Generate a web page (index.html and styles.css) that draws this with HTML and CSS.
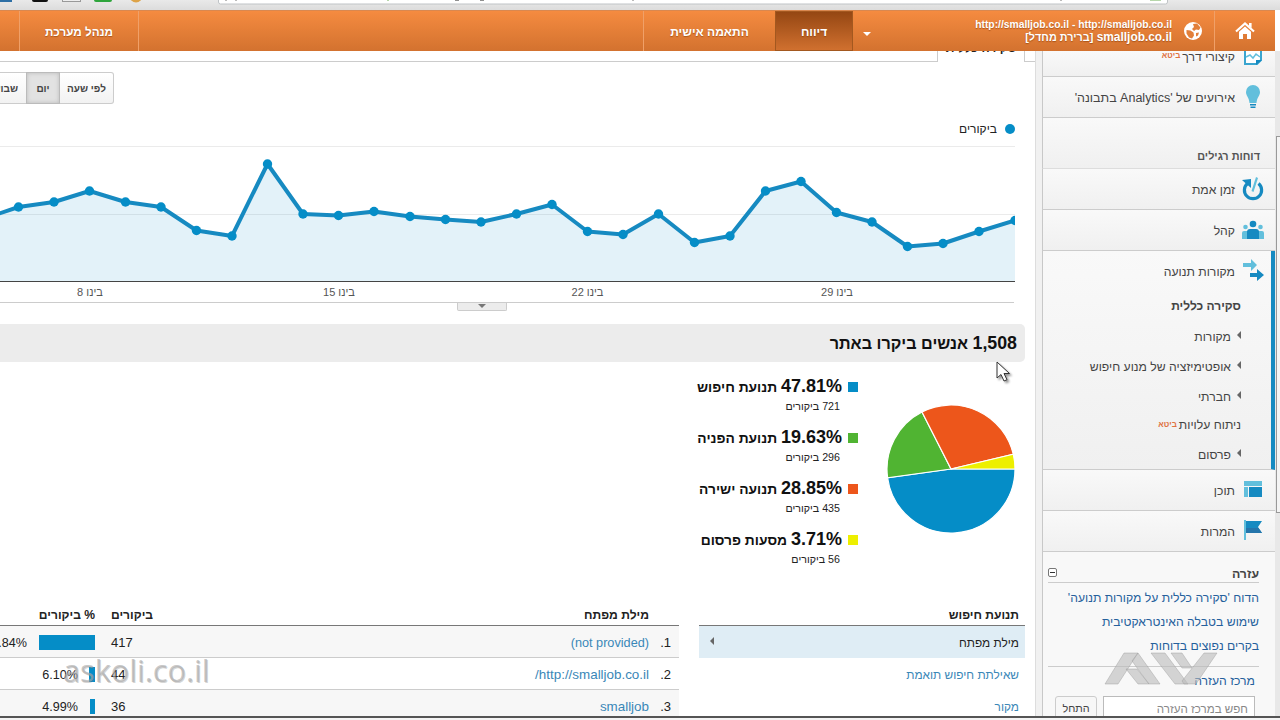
FILE: index.html
```
<!DOCTYPE html>
<html lang="he" dir="rtl">
<head>
    <meta charset="UTF-8">
    <title>סקירה כללית - מקורות תנועה</title>
    <link rel="stylesheet" href="styles.css">
</head>
<body>
    <div class="browser-strip">
        <svg width="1280" height="10">
            <rect x="0" y="0" width="12" height="2" fill="#2d6fa5"/>
            <rect x="32" y="-4" width="16" height="6" rx="2" fill="#111"/>
            <rect x="62.5" y="-4" width="18" height="5.5" fill="#eee" stroke="#999"/>
            <rect x="94" y="-4" width="18" height="6" rx="2" fill="#2fa53c"/>
            <circle cx="136" cy="-4" r="6.5" fill="#dda348"/>
            <rect x="218.5" y="-6" width="949" height="10" rx="2" fill="#fff" stroke="#bfc3c6"/>
            <path d="M226 0v1M236 0v1M633 0v1M1061 0v1" stroke="#777"/>
            <path d="M455 0h4M480 0h4" stroke="#222"/>
            <path d="M388 0v1M1150 0h11" stroke="#6fae57"/>
        </svg>
    </div>

    <div class="header">
        <div class="home">
            <svg width="20" height="18" viewBox="0 0 20 18">
                <path d="M1 9.5L10 1.5l9 8" fill="none" stroke="#fff" stroke-width="2.2"/>
                <path d="M14 1h2.6v5L14 4zM4 9.8l6-5.3 6 5.3V17h-4v-5H8v5H4z" fill="#fff"/>
            </svg>
        </div>
        <div class="account">
            <svg width="18" height="18" viewBox="0 0 18 18">
                <circle cx="9" cy="9" r="9" fill="#fff"/>
                <path d="M9 2l4-.5 3.500 4-1.500 2.500-3-.5-2 1.500-2-2 2-2zM2.500 8l4 .5 3 2 .5 3-2 3-3-1-2.500-4z" fill="#e27f3a"/>
                <path d="M12 11l3-.5-1 3-2 1z" fill="#e27f3a"/>
            </svg>
            <div class="account-text">
                <div class="account-url">http://smalljob.co.il - http://smalljob.co.il</div>
                <div class="account-name">smalljob.co.il <span class="view">[ברירת מחדל]</span></div>
            </div>
            <span class="caret"></span>
        </div>
        <div class="nav-item nav-report active">דיווח</div>
        <div class="nav-item nav-custom">התאמה אישית</div>
        <div class="nav-space"></div>
        <div class="nav-item nav-admin">מנהל מערכת</div>
        <div class="nav-rest"></div>
    </div>

    <div class="main">
        <div class="scrollbar"><div class="thumb"></div></div>
        <div class="sidebar">
            <div class="menu-item cut">
                <svg class="icon" width="24" height="24" viewBox="0 0 22 24">
                    <path d="M3 3h16v13l-4 4H3z" fill="#fff" stroke="#3aa5cf" stroke-width="2"/>
                    <path d="M4 13l4-2 3 3 3-4 4 3" fill="none" stroke="#62bfdc" stroke-width="1.5"/>
                    <path d="M14 21v-5h6z" fill="#168ac1"/>
                </svg>
                <span>קיצורי דרך</span><sup class="beta">ביטא</sup>
            </div>
            <div class="menu-item analytics">
                <svg class="icon" width="24" height="24" viewBox="0 0 22 24">
                    <path d="M11 0a7 7 0 0 1 7 7c0 4-3 5-3.500 11h-7C7 12 4 11 4 7a7 7 0 0 1 7-7z" fill="#62bfdc"/>
                    <path d="M8 19h6v1.500H8zM8.500 21.500h5V23h-5z" fill="#168ac1"/>
                </svg>
                <span>אירועים של 'Analytics בתבונה'</span>
            </div>
            <div class="menu-title">דוחות רגילים</div>
            <div class="menu-item">
                <svg class="icon" width="24" height="24" viewBox="0 0 22 24">
                    <path d="M5.500 6.500a8.600 8.600 0 1 0 11 0" fill="none" stroke="#168ac1" stroke-width="3.2"/>
                    <path d="M0 3l9-1v9z" fill="#168ac1"/>
                    <path d="M14 0l2 1-4.500 14-2-1z" fill="#62bfdc"/>
                </svg>
                <span>זמן אמת</span>
            </div>
            <div class="menu-item">
                <svg class="icon" width="24" height="20" viewBox="0 0 24 20">
                    <circle cx="4.500" cy="7" r="2.300" fill="#62bfdc"/><circle cx="19.500" cy="7" r="2.300" fill="#62bfdc"/>
                    <path d="M1 19v-6q0-2 2-2h18q2 0 2 2v6z" fill="#62bfdc"/>
                    <circle cx="12" cy="4" r="3.300" fill="#168ac1"/>
                    <path d="M6 19v-7q0-3 3-3h6q3 0 3 3v7z" fill="#168ac1"/>
                </svg>
                <span>קהל</span>
            </div>
            <div class="menu-group">
                <div class="menu-item open">
                    <svg class="icon" width="24" height="24" viewBox="0 0 22 24">
                        <path d="M1 4h8V0l6 6-6 6V8H1z" fill="#62bfdc"/>
                        <path d="M8 14h7v-4l7 6-7 6v-4H8z" fill="#168ac1"/>
                    </svg>
                    <span>מקורות תנועה</span>
                </div>
                <div class="sub-item current">סקירה כללית</div>
                <div class="sub-item"><i class="tri"></i><span>מקורות</span></div>
                <div class="sub-item"><i class="tri"></i><span>אופטימיזציה של מנוע חיפוש</span></div>
                <div class="sub-item"><i class="tri"></i><span>חברתי</span></div>
                <div class="sub-item costs"><span>ניתוח עלויות</span><sup class="beta">ביטא</sup></div>
                <div class="sub-item"><i class="tri"></i><span>פרסום</span></div>
            </div>
            <div class="menu-item">
                <svg class="icon" width="24" height="20" viewBox="0 0 22 20">
                    <path d="M2 1h18v5H2zM2 7h4v10H2z" fill="#62bfdc"/>
                    <path d="M7 7h13v10H7z" fill="#168ac1"/>
                </svg>
                <span>תוכן</span>
            </div>
            <div class="menu-item">
                <svg class="icon" width="24" height="24" viewBox="0 0 22 24">
                    <path d="M2 1h2v20H2z" fill="#62bfdc"/>
                    <path d="M4 2h16l-4 6 4 6H4z" fill="#168ac1"/>
                    <path d="M4 9h12.500l3.500 5H4z" fill="#2575ab"/>
                </svg>
                <span>המרות</span>
            </div>
            <div class="help">
                <div class="help-head"><b>עזרה</b><span class="collapse"></span></div>
                <a class="help-link">הדוח 'סקירה כללית על מקורות תנועה'</a>
                <a class="help-link">שימוש בטבלה האינטראקטיבית</a>
                <a class="help-link">בקרים נפוצים בדוחות</a>
                <div class="help-center">
                    <a class="help-link">מרכז העזרה</a>
                    <div class="help-search">
                        <div class="search-box">חפש במרכז העזרה</div>
                        <div class="search-button">התחל</div>
                    </div>
                </div>
            </div>
        </div>

        <div class="content">
            <div class="tabs">
                <div class="tab-edge"></div>
                <div class="tab">סקירה כללית</div>
                <div class="tab-line"></div>
            </div>
            <div class="range">
                <div class="range-button hour">לפי שעה</div>
                <div class="range-button day">יום</div>
                <div class="range-button week">שבוע</div>
            </div>
            <div class="legend"><i class="dot"></i><span>ביקורים</span></div>
            <svg class="chart" width="1015" height="162" viewBox="0 140 1015 162">
                <path d="M0 146.5H1015M0 214.5H1015" stroke="#ebebeb"/>
                <path id="area" fill="#058dc7" fill-opacity=".115"/>
                <path id="line" fill="none" stroke="#168ac1" stroke-width="4" stroke-linejoin="round"/>
                <g id="dots" fill="#058dc7"></g>
                <path d="M0 281.5H1015" stroke="#444"/>
                <g class="axis">
                    <text x="90" y="296">בינו 8</text>
                    <text x="339" y="296">בינו 15</text>
                    <text x="587.5" y="296">בינו 22</text>
                    <text x="837" y="296">בינו 29</text>
                </g>
            </svg>
            <div class="expander"><div class="handle"><i></i></div></div>
            <h2 class="summary"><b>1,508</b> אנשים ביקרו באתר</h2>
            <div class="sources">
                <svg class="pie" width="130" height="130" viewBox="-65 -65 130 130" stroke="#fff" stroke-width="1.2">
                    <path d="M0 0L64 0A64 64 0 0 1 -63.400 8.780z" fill="#058dc7"/>
                    <path d="M0 0L-63.400 8.780A64 64 0 0 1 -29 -57.050z" fill="#50b432"/>
                    <path d="M0 0L-29 -57.050A64 64 0 0 1 62.270 -14.780z" fill="#ed561b"/>
                    <path d="M0 0L62.270 -14.780A64 64 0 0 1 64 0z" fill="#edef00"/>
                </svg>
                <div class="source-list">
                    <div class="source">
                        <i class="swatch blue"></i>
                        <div><div class="source-name"><b>47.81%</b> תנועת חיפוש</div><div class="source-visits">721 ביקורים</div></div>
                    </div>
                    <div class="source">
                        <i class="swatch green"></i>
                        <div><div class="source-name"><b>19.63%</b> תנועת הפניה</div><div class="source-visits">296 ביקורים</div></div>
                    </div>
                    <div class="source">
                        <i class="swatch orange"></i>
                        <div><div class="source-name"><b>28.85%</b> תנועה ישירה</div><div class="source-visits">435 ביקורים</div></div>
                    </div>
                    <div class="source">
                        <i class="swatch yellow"></i>
                        <div><div class="source-name"><b>3.71%</b> מסעות פרסום</div><div class="source-visits">56 ביקורים</div></div>
                    </div>
                </div>
            </div>
            <div class="tables">
                <div class="dimensions">
                    <div class="table-head">תנועת חיפוש</div>
                    <div class="dimension selected"><span>מילת מפתח</span><i class="tri"></i></div>
                    <div class="dimension">שאילתת חיפוש תואמת</div>
                    <div class="dimension">מקור</div>
                </div>
                <div class="keywords">
                    <div class="table-head row">
                        <span class="num"></span><span class="word">מילת מפתח</span><span class="visits">ביקורים</span><span class="share-head">% ביקורים</span>
                    </div>
                    <div class="row odd">
                        <span class="num">1.</span><a class="word">(not provided)</a><span class="visits">417</span>
                        <span class="share"><i class="bar" style="width: 56px"></i></span><span class="percent">57.84%</span>
                    </div>
                    <div class="row">
                        <span class="num">2.</span><a class="word wide">http://smalljob.co.il/</a><span class="visits">44</span>
                        <span class="share small"><i class="bar" style="width: 6px"></i></span><span class="percent">6.10%</span>
                    </div>
                    <div class="row odd">
                        <span class="num">3.</span><a class="word wide">smalljob</a><span class="visits">36</span>
                        <span class="share small"><i class="bar" style="width: 5px"></i></span><span class="percent">4.99%</span>
                    </div>
                </div>
            </div>
        </div>
    </div>
    <div class="taskbar"></div>

    <div class="watermark">askoli.co.il</div>
    <svg class="logo-mark" width="114" height="34" viewBox="0 0 114 34">
        <g fill="#bbb" fill-opacity=".6" stroke="#999" stroke-opacity=".4">
            <path d="M1 32L20 1h14L14 32z"/>
            <path d="M22 17h11l12 15H34z"/>
            <path d="M34 1l22 31H45L28 9z"/>
            <path d="M47 1h14l23 31H71z"/>
            <path d="M67 1h11l10 15H78z"/>
            <path d="M100 1h13L92 32H80l-2-3z"/>
        </g>
    </svg>
    <svg class="cursor" width="18" height="24" viewBox="0 0 18 24">
        <path d="M1 1v16l4-3.500 3 6.500 3-1.300-3-6.200h5.500z" fill="#fff" stroke="#333"/>
    </svg>
    <script src="chart.js"></script>
</body>
</html>
```
FILE: styles.css
```
* {
    box-sizing: border-box;
}
body {
    margin: 0;
    width: 1280px;
    height: 720px;
    overflow: hidden;
    position: relative;
    display: flex;
    flex-direction: column;
    background: #fff;
    color: #222;
    font: 12px/16px "Liberation Sans", Arial, sans-serif;
}
svg {
    display: block;
    flex: none;
}
.browser-strip {
    height: 10px;
    flex: none;
    background: linear-gradient(#e9e9e9, #dcdcdc);
    direction: ltr;
}

/* header */
.header {
    height: 41px;
    width: 1275px;
    margin-right: 5px;
    flex: none;
    display: flex;
    background: linear-gradient(#f58b40, #d3722f);
    border-top: 1px solid #d98850;
    color: #fff;
    font-weight: bold;
    text-shadow: 0 1px 1px rgba(120, 50, 0, 0.5);
}
.home {
    width: 61px;
    display: flex;
    align-items: center;
    justify-content: center;
    border-left: 1px solid #f0a068;
}
.account {
    width: 362px;
    padding-right: 12px;
    display: flex;
    align-items: center;
}
.account-text {
    width: 301px;
    margin-right: 12px;
    line-height: 13px;
}
.account-url {
    font-size: 10.3px;
}
.account-name {
    font-size: 11.9px;
}
.view {
    font-size: 10.8px;
}
.caret {
    margin-top: 6px;
    border: 4px solid transparent;
    border-top-color: #fff;
    border-bottom: 0;
}
.nav-item {
    display: flex;
    align-items: center;
    justify-content: center;
    padding-top: 2px;
    border-left: 1px solid #f0a068;
    flex: none;
}
.nav-report {
    width: 78px;
}
.nav-item.active {
    background: linear-gradient(#954713, #d0702f);
    border: 1px solid #a3581f;
}
.nav-custom {
    width: 132px;
}
.account {
    width: 361px;
}
.nav-space {
    flex: 1;
    border-left: 1px solid #f0a068;
}
.nav-admin {
    width: 119px;
    font-size: 11.7px;
}
.nav-rest {
    width: 19px;
}

/* page body */
.main {
    height: 665px;
    flex: none;
    display: flex;
    overflow: hidden;
}
.scrollbar {
    width: 5px;
    flex: none;
    background: #e8e8e8;
    padding-top: 85px;
}
.thumb {
    height: 377px;
    margin-left: 1px;
    border: 1px solid #999;
    border-right: 0;
    background: #f4f4f4;
}

/* sidebar */
.sidebar {
    width: 239px;
    flex: none;
    background: #f8f8f8;
    border-left: 6px solid #f1f1f1;
    color: #444;
}
.menu-item {
    height: 41px;
    display: flex;
    align-items: center;
    padding-right: 10px;
    border-bottom: 1px solid #ccc;
    border-left: 1px solid #c8c8c8;
    background: linear-gradient(#f9f9f9, #f0f0f0);
    font-size: 12.2px;
}
.menu-item span {
    padding-top: 1px;
}
.icon {
    margin-left: 6px;
}
.menu-item.cut {
    height: 26px;
    padding-bottom: 15px;
}
.analytics {
    font-size: 12.5px;
}
.beta {
    margin-right: 2px;
    color: #e0713f;
    font: bold 8px/10px "Liberation Sans", Arial, sans-serif;
}
.menu-title {
    height: 51px;
    padding: 30px 15px 0 0;
    border-bottom: 1px solid #ddd;
    border-left: 1px solid #c8c8c8;
    background: linear-gradient(#f9f9f9, #f0f0f0);
    font-weight: bold;
    font-size: 10.9px;
    color: #555;
}
.menu-group {
    height: 219px;
    border-bottom: 1px solid #ccc;
    border-left: 1px solid #c8c8c8;
    border-right: 4px solid #168ac1;
    background: linear-gradient(#f9f9f9, #f0f0f0);
}
.menu-item.open {
    height: 40px;
    border: 0;
    background: none;
    padding-right: 6px;
}
.sub-item {
    height: 30px;
    display: flex;
    align-items: center;
    padding-right: 30px;
    padding-top: 1px;
    font-size: 12.2px;
}
.sub-item.current {
    font-weight: bold;
    font-size: 12px;
    padding-top: 0;
}
.sub-item.costs {
    height: 28px;
    padding-top: 0;
}
.tri {
    border: 4px solid transparent;
    border-left: 0;
    border-right: 4px solid #666;
    margin-bottom: 4px;
}
.sub-item .tri {
    margin-left: 5px;
}
.sub-item .tri + span {
    margin-right: 1px;
}

/* help box */
.help {
    padding: 14px 16px 0 5px;
    border-left: 1px solid #c8c8c8;
    height: 170px;
}
.help-head {
    height: 17px;
    display: flex;
    justify-content: space-between;
    border-bottom: 1px solid #ccc;
    margin-bottom: 3px;
    font-size: 12.3px;
}
.collapse {
    width: 9px;
    height: 9px;
    margin-top: 2px;
    padding: 3px 1px;
    border: 1px solid #777;
    border-radius: 2px;
    background: #fff;
}
.collapse::after {
    content: "";
    display: block;
    height: 1px;
    background: #333;
}
.help-link {
    display: block;
    height: 24px;
    line-height: 24px;
    color: #25609c;
    font-size: 12.2px;
    white-space: nowrap;
}
.help-center {
    margin-top: 8px;
    padding: 2px 4px 0 0;
    border-top: 1px solid #ccc;
}
.help-search {
    margin-top: 3px;
    display: flex;
    gap: 6px;
}
.search-box,
.search-button {
    height: 30px;
    border: 1px solid #bbb;
    background: #fff;
    line-height: 23px;
    font-size: 11.6px;
}
.search-box {
    width: 152px;
    padding-right: 6px;
    color: #888;
}
.search-button {
    width: 42px;
    border-color: #ccc;
    border-radius: 3px;
    background: #f7f7f7;
    text-align: center;
    font-size: 10.8px;
}

/* report */
.content {
    width: 1036px;
    flex: none;
    border-right: 1px solid #ddd;
    background: #fff;
}
.tabs {
    height: 11px;
    display: flex;
}
.tab-edge {
    width: 10px;
    border-bottom: 1px solid #ccc;
}
.tab {
    width: 88px;
    height: 14px;
    margin-top: -3px;
    border: solid #ccc;
    border-width: 0 1px;
    line-height: 0;
    text-align: center;
    font-weight: bold;
    font-size: 12.1px;
}
.tab-line {
    flex: 1;
    border-bottom: 1px solid #ccc;
}
.range {
    margin: 10px 921px 0 0;
    display: flex;
    height: 32px;
    font-size: 10px;
    font-weight: bold;
    line-height: 31px;
    text-align: center;
    color: #444;
}
.range-button {
    flex: none;
    border: 1px solid #ccc;
    background: linear-gradient(#fff, #f2f2f2);
}
.hour {
    width: 54px;
    border-left: 0;
    border-radius: 0 3px 3px 0;
}
.day {
    width: 34px;
    border-color: #bbb;
    background: #e2e2e2;
    box-shadow: inset 0 0 4px #bbb;
}
.week {
    width: 44px;
    padding-right: 8px;
    text-align: right;
    border-right: 0;
}
.legend {
    height: 36px;
    padding: 14px 20px 0 0;
    display: flex;
    align-items: center;
    gap: 8px;
}
.dot {
    width: 10px;
    height: 10px;
    border-radius: 50%;
    background: #058dc7;
}
.chart {
    margin-right: 20px;
    direction: ltr;
}
.axis text {
    direction: rtl;
    text-anchor: middle;
    font-size: 11px;
    fill: #555;
}
.expander {
    width: 1014px;
    margin-right: 21px;
    height: 22px;
    border-top: 1px solid #ccc;
}
.handle {
    width: 50px;
    height: 8px;
    margin-right: 507px;
    border: 1px solid #ccc;
    border-top: 0;
    border-radius: 0 0 2px 2px;
    background: #ececec;
    display: flex;
    justify-content: center;
}
.handle i {
    border: 4px solid transparent;
    border-top-color: #777;
    border-bottom: 0;
    height: 4px;
    margin-top: 1px;
}
.summary {
    margin: 0 10px 0 0;
    height: 38px;
    padding-right: 8px;
    background: #ececec;
    border-radius: 0 5px 5px 0;
    font-size: 16.2px;
    line-height: 38px;
    color: #111;
}
.summary b {
    font-size: 17.8px;
}
.sources {
    height: 241px;
    display: flex;
    padding-right: 19px;
}
.pie {
    margin-top: 42px;
    margin-left: 28px;
}
.source-list {
    padding-top: 13px;
}
.source {
    height: 51px;
    display: flex;
    gap: 6px;
}
.swatch {
    width: 10px;
    height: 10px;
    margin-top: 7px;
    flex: none;
}
.blue {
    background: #058dc7;
}
.green {
    background: #50b432;
}
.orange {
    background: #ed561b;
}
.yellow {
    background: #edef00;
}
.source-name {
    height: 22px;
    line-height: 22px;
    font-size: 13.8px;
    font-weight: bold;
    color: #111;
}
.source-name b {
    font-size: 18px;
}
.source-visits {
    padding-right: 2px;
    font-size: 10.7px;
    line-height: 18px;
}
.tables {
    display: flex;
    padding-right: 10px;
    gap: 20px;
}
.dimensions {
    width: 326px;
}
.keywords {
    width: 679px;
}
.table-head {
    height: 23px;
    border-bottom: 1px solid #777;
    font-weight: bold;
    font-size: 12.1px;
}
.dimensions .table-head {
    padding: 4px 6px 0 0;
}
.dimension {
    height: 32px;
    display: flex;
    align-items: center;
    justify-content: space-between;
    padding: 2px 6px 0 11px;
    font-size: 11.85px;
    color: #3a87b7;
}
.dimension.selected {
    background: #dfedf5;
    color: #222;
}
.row {
    height: 32px;
    display: flex;
    align-items: center;
    padding-top: 2px;
    border-bottom: 1px solid #ccc;
    font-size: 13px;
}
.row.odd {
    background: #f7f7f7;
}
.row.table-head {
    font-size: 12.1px;
    height: 23px;
    border-bottom-color: #777;
}
.num {
    width: 30px;
    padding-right: 8px;
    flex: none;
}
.word {
    width: 494px;
    flex: none;
}
a.word {
    color: #3a87b7;
    font-size: 12.7px;
}
a.word.wide {
    font-size: 13.4px;
}
.visits {
    width: 44px;
    flex: none;
    text-align: left;
    direction: ltr;
}
.table-head .visits {
    direction: rtl;
    text-align: left;
}
.share-head {
    margin-right: 16px;
    white-space: nowrap;
}
.share {
    width: 56px;
    margin-right: 16px;
    flex: none;
}
.share.small {
    width: 17px;
}
.bar {
    display: block;
    height: 15px;
    margin-top: -1px;
    background: #058dc7;
}
.percent {
    margin-right: 12px;
    flex: none;
    font-size: 12.6px;
}
.share.small + .percent {
    margin-right: 0;
}

.taskbar {
    height: 4px;
    flex: none;
    border-top: 2px solid #555;
    background: #f4f4f4;
}

/* things lying over the page */
.watermark {
    position: absolute;
    left: 63px;
    top: 651px;
    direction: ltr;
    font: 30.7px/38px "Open Sans", sans-serif;
    color: rgba(170, 170, 170, 0.65);
    text-shadow: 1px 1px rgba(110, 110, 110, 0.3);
}
.logo-mark {
    position: absolute;
    left: 1104px;
    top: 652px;
}
.cursor {
    position: absolute;
    left: 996px;
    top: 361px;
    filter: drop-shadow(2px 2px 1px rgba(0, 0, 0, 0.4));
}
```
FILE: chart.js
```
const points = [
    [-17, 219], [18.5, 207], [54, 202], [89.5, 191], [125.5, 202], [161, 207],
    [196.5, 230.5], [232, 236], [267.5, 164], [303, 214], [338.5, 215.5],
    [374, 211.5], [410, 216.5], [445.5, 219.5], [481, 222], [516.5, 214],
    [552, 204.5], [587.5, 231.5], [623, 234.5], [658.5, 214], [694.5, 242.5],
    [730, 236], [765.5, 191], [801, 181.5], [836.5, 212.5], [872, 222],
    [907.5, 246.5], [943, 243.5], [979, 231.5], [1015, 220.5]
];

const path = 'M' + points.map(p => p.join(' ')).join('L');
document.getElementById('line').setAttribute('d', path);
document.getElementById('area').setAttribute('d', path + 'V281H-17z');

// one dot per day
points.forEach(([x, y]) => {
    const dot = document.createElementNS('http://www.w3.org/2000/svg', 'circle');
    dot.setAttribute('cx', x);
    dot.setAttribute('cy', y);
    dot.setAttribute('r', 4.7);
    document.getElementById('dots').appendChild(dot);
});
```
